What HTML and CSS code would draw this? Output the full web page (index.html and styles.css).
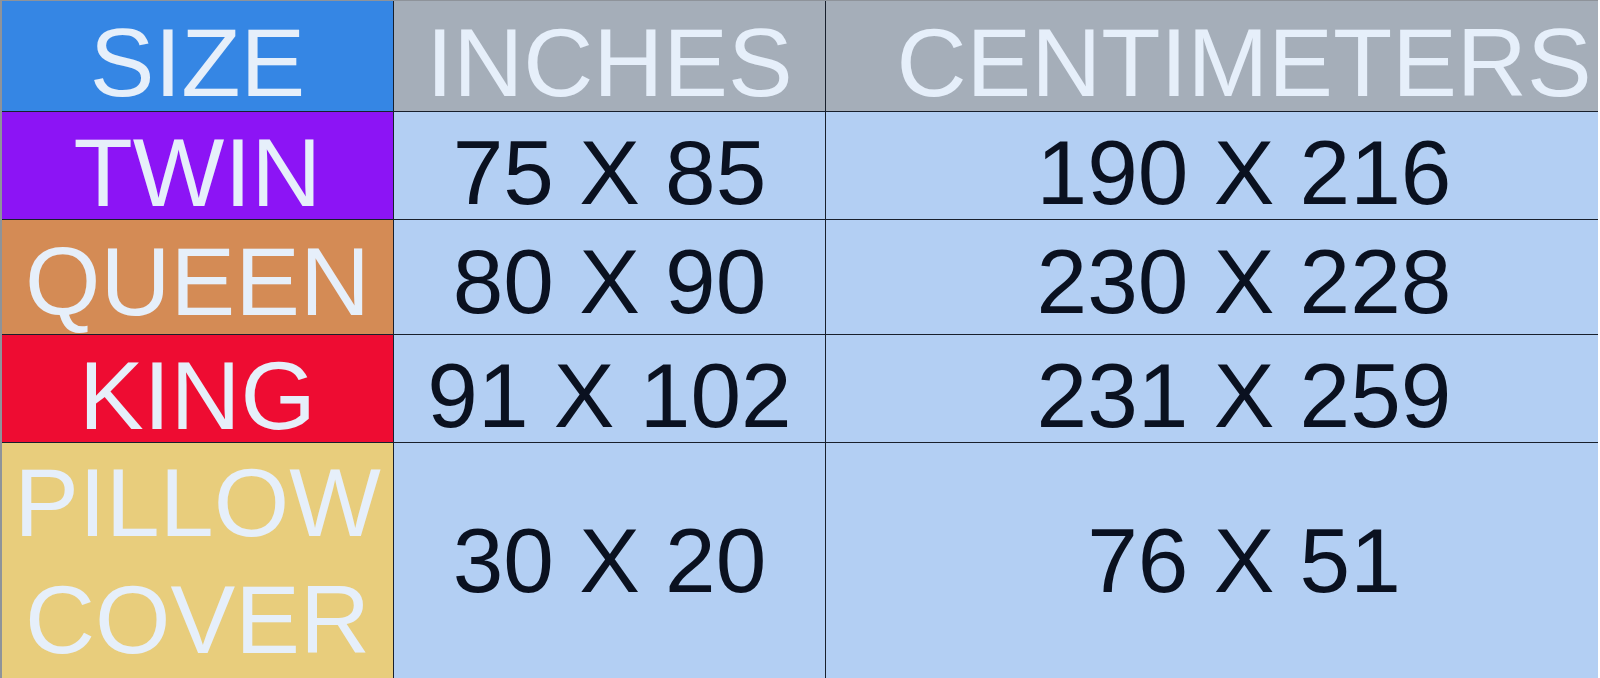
FILE: index.html
```html
<!DOCTYPE html>
<html>
<head>
<meta charset="utf-8">
<link rel="stylesheet" href="styles.css">
</head>
<body>
<div class="chart">
  <div class="cell head size">SIZE</div>
  <div class="cell head gray">INCHES</div>
  <div class="cell head gray cm">CENTIMETERS</div>

  <div class="cell label twin low">TWIN</div>
  <div class="cell val low">75 X 85</div>
  <div class="cell val cm low">190 X 216</div>

  <div class="cell label queen mid">QUEEN</div>
  <div class="cell val mid">80 X 90</div>
  <div class="cell val cm mid">230 X 228</div>

  <div class="cell label king low">KING</div>
  <div class="cell val low">91 X 102</div>
  <div class="cell val cm low">231 X 259</div>

  <div class="cell label pillow">PILLOW<br>COVER</div>
  <div class="cell val">30 X 20</div>
  <div class="cell val cm">76 X 51</div>
</div>
</body>
</html>
```

FILE: styles.css
```css
html, body {
  margin: 0;
  padding: 0;
  background: #ffffff;
}

.chart {
  width: 1596px;
  height: 677px;
  border-left: 2px solid #8e939a;
  border-top: 1px solid #8e939a;
  display: grid;
  grid-template-columns: 391px 431px 772px;
  grid-template-rows: 110px 107px 114px 107px 235px;
  gap: 1px;
  background: #18202c;
  font-family: "Liberation Sans", Arial, sans-serif;
  font-size: 97px;
}

.cell {
  display: flex;
  align-items: center;
  justify-content: center;
  text-align: center;
  line-height: 117px;
  white-space: nowrap;
  box-sizing: border-box;
}

.head {
  color: #e6effa;
  padding-top: 12px;
}

.size { background: #3586e4; }
.gray { background: #a5aeb9; }

.label { color: #e6effa; }
.twin { background: #8c14f5; }
.queen { background: #d48b55; }
.king { background: #ee0c32; }
.pillow { background: #e8cd7c; }

.val {
  background: #b3cff3;
  color: #0a1120;
  font-size: 91px;
}

.cm { padding-left: 64px; }

.low { padding-top: 14px; }
.mid { padding-top: 8px; }
```
